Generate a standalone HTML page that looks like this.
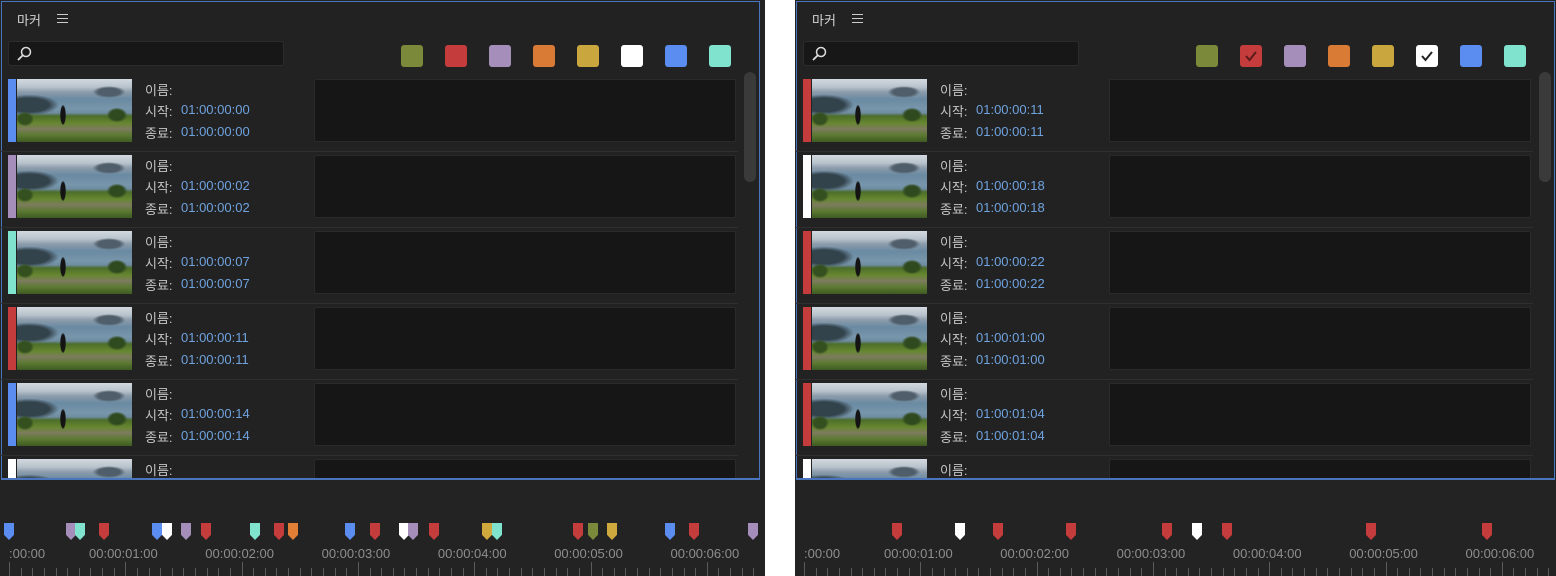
<!DOCTYPE html>
<html><head><meta charset="utf-8">
<style>
*{box-sizing:border-box;margin:0;padding:0}
body{width:1556px;height:576px;background:#fff;position:relative;overflow:hidden;font-family:"Liberation Sans","Noto Sans CJK KR",sans-serif}
.pan{position:absolute;top:0;height:576px;background:#232323;overflow:hidden}
.frame{position:absolute;left:1px;top:1px;width:759px;height:479px;border:1px solid #4a74bd;background:#222}
.abs{position:absolute}
.title{color:#d4d4d4;font-size:13px}
.search{background:#171717;border:1px solid #2c2c2c;border-radius:3px}
.sw{position:absolute;width:22px;height:22px;border-radius:3px}
.row{position:absolute;left:0;width:738px;height:76px;border-bottom:1px solid #2f2f2f}
.bar{position:absolute;left:8px;top:3px;width:8px;height:63px}
.th{position:absolute;left:17px;top:3px;width:115px;height:63px;
background:
radial-gradient(ellipse 4px 14px at 46px 36px,#141414 60%,transparent 75%),
radial-gradient(ellipse 14px 10px at 100px 36px,#2f4a1e 50%,transparent 75%),
radial-gradient(ellipse 12px 10px at 8px 40px,#34501f 50%,transparent 75%),
linear-gradient(to bottom,transparent 0,transparent 34px,#4d6e2a 37px,#66872f 44px,#7c7b5e 50px,#5c7a32 56px,#3e5a22 63px),
radial-gradient(ellipse 40px 14px at 12px 26px,#33434c 50%,transparent 75%),
radial-gradient(ellipse 22px 8px at 92px 13px,#4f5e6a 50%,transparent 75%),
linear-gradient(to bottom,#d2d8df 0,#b8c3cc 8px,#8d9cab 13px,#6a8aa2 20px,#7896ab 30px,#6a879b 36px)}
.lb{position:absolute;left:145px;color:#c4c4c4;font-size:13px}
.tc{position:absolute;left:181px;color:#6fa3e0;font-size:13px}
.cm{position:absolute;left:314px;top:3px;width:422px;height:63px;background:#161616;border:1px solid #2a2a2a;border-radius:2px}
.mk{position:absolute;top:523px;width:10px;height:17px;clip-path:polygon(0 0,100% 0,100% 70%,50% 100%,0 70%)}
.tl{position:absolute;top:546px;color:#8e8e8e;font-size:13px}
.tk{position:absolute;width:1px;background:#5a5a5a}
</style></head><body>
<div class="pan" id="p0" style="left:0;width:765px"></div>
<div class="pan" id="p1" style="left:795px;width:761px"></div>
<script>
var C={b:'#5b8cf0',l:'#a58fba',m:'#7fe3cd',r:'#c43c3c',w:'#ffffff',o:'#e07f35',g:'#cfa83e',v:'#7a8a3a'};
function build(id,bars,times,marks,selR,selW){
 var p=document.getElementById(id),h='';
 h+='<div class="frame"></div>';
 h+='<div class="abs title" style="left:17px;top:10px">마커</div>';
 h+='<div class="abs" style="left:57px;top:14px;width:11px;height:9px;border-top:1.5px solid #ccc;border-bottom:1.5px solid #ccc"><div style="margin-top:2.5px;height:1.5px;background:#ccc"></div></div>';
 h+='<div class="abs search" style="left:8px;top:41px;width:276px;height:25px"><svg width="20" height="20" style="position:absolute;left:6px;top:3px"><circle cx="11" cy="7" r="4.5" fill="none" stroke="#ddd" stroke-width="1.5"/><line x1="7.8" y1="10.2" x2="3" y2="15" stroke="#ddd" stroke-width="1.8"/></svg></div>';
 var sc=['#7a8a3a','#c43c3c','#a58fba','#d97a35','#c9a63e','#ffffff','#5b8cf0','#7fe3cd'];
 for(var i=0;i<8;i++){var ck='';if((i==1&&selR)||(i==5&&selW))ck='<svg width="22" height="22"><path d="M6 11 L9.5 15 L16 7" fill="none" stroke="'+(i==1?'#5a1a1a':'#222')+'" stroke-width="2"/></svg>';
  h+='<div class="sw" style="left:'+(401+i*44)+'px;top:45px;background:'+sc[i]+'">'+ck+'</div>';}
 for(var r=0;r<6;r++){var y=76+r*76;
  h+='<div class="row" style="top:'+y+'px"><div class="bar" style="background:'+C[bars[r]]+'"></div><div class="th"></div>';
  h+='<div class="lb" style="top:4px">이름:</div>';
  if(r<5){h+='<div class="lb" style="top:25px">시작:</div><div class="tc" style="top:26px">'+times[r]+'</div><div class="lb" style="top:47px">종료:</div><div class="tc" style="top:48px">'+times[r]+'</div>';}
  h+='<div class="cm"></div></div>';}
 h+='<div class="abs" style="left:0;top:480px;width:766px;height:96px;background:#232323"></div>';
 h+='<div class="abs" style="left:744px;top:72px;width:12px;height:110px;background:#3a3a3a;border-radius:6px"></div>';
 h+='<div class="abs" style="left:0;top:479px;width:761px;height:2px;background:#232323"></div>';
 h+='<div class="abs" style="left:1px;top:478px;width:759px;height:2px;background:#4a74bd"></div>';
 for(var k=0;k<marks.length;k++)h+='<div class="mk" style="left:'+(marks[k][0]-5)+'px;background:'+C[marks[k][1]]+'"></div>';
 h+='<div class="tl" style="left:9px">:00:00</div>';
 for(var s=1;s<=6;s++)h+='<div class="tl" style="left:'+(89+(s-1)*116.3)+'px">00:00:0'+s+':00</div>';
 for(var t=0;t<70;t++){var x=9+t*11.63;var maj=t%10==0;h+='<div class="tk" style="left:'+Math.round(x)+'px;top:'+(maj?562:568)+'px;height:'+(maj?14:8)+'px"></div>';}
 p.innerHTML=h;
}
build('p0',['b','l','m','r','b','w'],['01:00:00:00','01:00:00:02','01:00:00:07','01:00:00:11','01:00:00:14'],
[[9,'b'],[71,'l'],[80,'m'],[104,'r'],[157,'b'],[167,'w'],[186,'l'],[206,'r'],[255,'m'],[279,'r'],[293,'o'],[350,'b'],[375,'r'],[404,'w'],[413,'l'],[434,'r'],[487,'g'],[497,'m'],[578,'r'],[593,'v'],[612,'g'],[670,'b'],[694,'r'],[753,'l']],false,false);
build('p1',['r','w','r','r','r','w'],['01:00:00:11','01:00:00:18','01:00:00:22','01:00:01:00','01:00:01:04'],
[[102,'r'],[165,'w'],[203,'r'],[276,'r'],[372,'r'],[402,'w'],[432,'r'],[576,'r'],[692,'r']],true,true);
</script>
</body></html>
